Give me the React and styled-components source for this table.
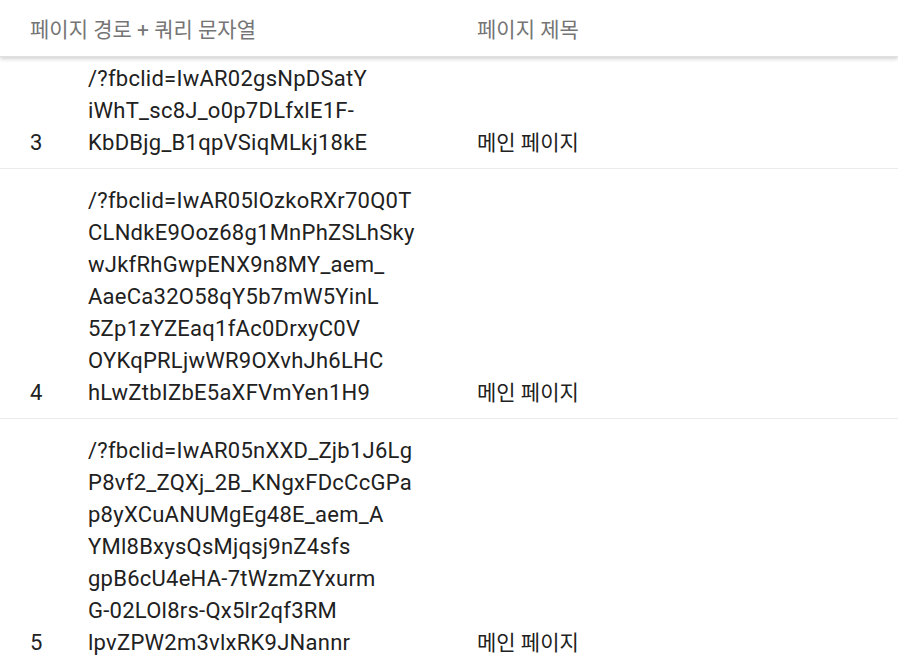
import React from 'react';
import styled, { createGlobalStyle } from 'styled-components';

const GlobalStyle = createGlobalStyle`
    html, body {
        margin: 0;
        padding: 0;
        background: #ffffff;
    }

    body {
        font-family: Roboto, 'Noto Sans CJK KR', sans-serif;
        -webkit-font-smoothing: antialiased;
    }
`;

const rows = [
    {
        id: 3,
        path: [
            '/?fbclid=IwAR02gsNpDSatY',
            'iWhT_sc8J_o0p7DLfxlE1F-',
            'KbDBjg_B1qpVSiqMLkj18kE'
        ],
        title: '메인 페이지'
    },
    {
        id: 4,
        path: [
            '/?fbclid=IwAR05lOzkoRXr70Q0T',
            'CLNdkE9Ooz68g1MnPhZSLhSky',
            'wJkfRhGwpENX9n8MY_aem_',
            'AaeCa32O58qY5b7mW5YinL',
            '5Zp1zYZEaq1fAc0DrxyC0V',
            'OYKqPRLjwWR9OXvhJh6LHC',
            'hLwZtbIZbE5aXFVmYen1H9'
        ],
        title: '메인 페이지'
    },
    {
        id: 5,
        path: [
            '/?fbclid=IwAR05nXXD_Zjb1J6Lg',
            'P8vf2_ZQXj_2B_KNgxFDcCcGPa',
            'p8yXCuANUMgEg48E_aem_A',
            'YMl8BxysQsMjqsj9nZ4sfs',
            'gpB6cU4eHA-7tWzmZYxurm',
            'G-02LOl8rs-Qx5lr2qf3RM',
            'lpvZPW2m3vlxRK9JNannr'
        ],
        title: '메인 페이지'
    }
];

function App() {
    return (
        <>
            <GlobalStyle />
            <TableWrap>
                <Header>
                    <HeadCell $span={2}>페이지 경로 + 쿼리 문자열</HeadCell>
                    <HeadCell>페이지 제목</HeadCell>
                </Header>
                <Body>
                    {rows.map((row) => (
                        <Row key={row.id}>
                            <IndexCell>{row.id}</IndexCell>
                            <PathCell>
                                {row.path.map((line) => (
                                    <PathLine key={line}>{line}</PathLine>
                                ))}
                            </PathCell>
                            <TitleCell>{row.title}</TitleCell>
                        </Row>
                    ))}
                </Body>
            </TableWrap>
        </>
    );
}

const TableWrap = styled.div`
    width: 898px;
    height: 664px;
    overflow: hidden;
    color: #212121;
    font-size: 21px;
    line-height: 32px;
`;

const Header = styled.div`
    position: relative;
    z-index: 1;
    display: grid;
    grid-template-columns: 58px 389px 1fr;
    padding: 14px 0 10px 30px;
    background: #ffffff;
    border-bottom: 1px solid #e0e0e0;
    box-shadow: 0 2px 4px rgba(0, 0, 0, 0.18);
`;

const HeadCell = styled.div`
    grid-column: span ${(p) => p.$span || 1};
    color: #757575;
`;

const Body = styled.div`
    margin-top: -10px;
`;

const Row = styled.div`
    display: grid;
    grid-template-columns: 58px 389px 1fr;
    align-items: end;
    padding: 16px 0 9px 30px;
    border-bottom: 1px solid #ebebeb;
`;

const IndexCell = styled.div`
    font-size: 22px;
`;

const PathCell = styled.div`
    display: flex;
    flex-direction: column;
    font-size: 22px;
    letter-spacing: 0.25px;
`;

const PathLine = styled.span`
    white-space: nowrap;
`;

const TitleCell = styled.div``;

export default App;
